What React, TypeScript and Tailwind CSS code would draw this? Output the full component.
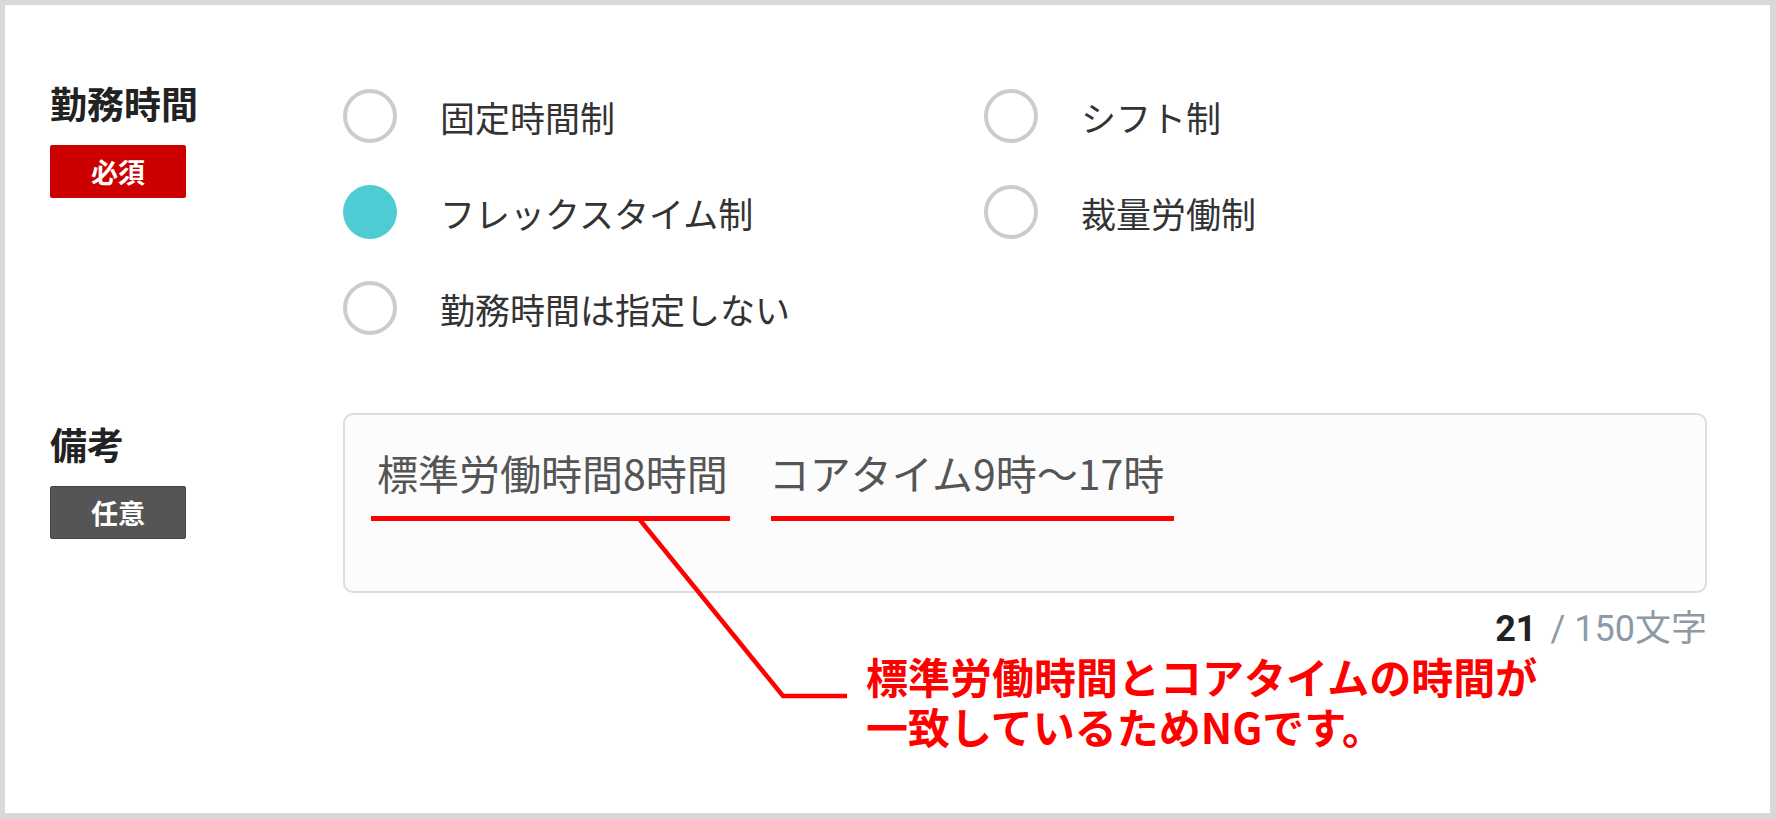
const jp = "font-['Noto_Sans_CJK_JP','Noto_Sans',sans-serif]";

const options = [
  { label: '固定時間制', checked: false },
  { label: 'シフト制', checked: false },
  { label: 'フレックスタイム制', checked: true },
  { label: '裁量労働制', checked: false },
  { label: '勤務時間は指定しない', checked: false },
];

function Radio({ label, checked }: { label: string; checked: boolean }) {
  return (
    <label className="flex h-[54px] items-center gap-[43px]">
      <span
        className={
          checked
            ? 'h-[54px] w-[54px] shrink-0 rounded-full bg-[#4fcbd4]'
            : 'h-[54px] w-[54px] shrink-0 rounded-full border-[4px] border-[#cccccc] bg-white'
        }
      />
      <span className="text-[35px] leading-none text-[#333333]">{label}</span>
    </label>
  );
}

function FieldLabel({ title, badge, required }: { title: string; badge: string; required?: boolean }) {
  return (
    <div className="flex flex-col items-start">
      <h2 className="text-[37px] font-bold leading-none text-[#222222]">{title}</h2>
      <span
        className={`mt-[23px] flex h-[53px] w-[136px] items-center justify-center rounded-[2px] text-[27px] font-bold leading-none text-white ${
          required ? 'bg-[#cc0000]' : 'border border-[#444444] bg-[#555555]'
        }`}
      >
        {badge}
      </span>
    </div>
  );
}

export default function App() {
  return (
    <div className={`relative h-[819px] w-[1776px] bg-[#d9d9d9] pb-[6px] pl-[5px] pr-[6px] pt-[5px] ${jp}`}>
      <div className="h-full bg-white pl-[45px]">
        {/* 勤務時間 */}
        <div className="flex pt-[80px]">
          <div className="w-[293px] shrink-0">
            <FieldLabel title="勤務時間" badge="必須" required />
          </div>
          <div className="grid grid-cols-[641px_1fr] gap-y-[42px] pt-[4px]">
            {options.map((o) => (
              <Radio key={o.label} label={o.label} checked={o.checked} />
            ))}
          </div>
        </div>

        {/* 備考 */}
        <div className="mt-[78px] flex">
          <div className="w-[293px] shrink-0 pt-[13px]">
            <FieldLabel title="備考" badge="任意" />
          </div>
          <div className="w-[1364px]">
            <div className="h-[180px] rounded-[10px] border-2 border-[#dddddd] bg-[#fcfcfc] pl-[32px] pt-[37px]">
              <p className="text-[41px] leading-none text-[#555555]">標準労働時間8時間　コアタイム9時〜17時</p>
            </div>
            <div className="mt-[18px] flex h-[36px] items-center justify-end text-[36px] leading-none">
              <span className="font-['Roboto','Noto_Sans_CJK_JP',sans-serif] font-bold text-[#222222]">21</span>
              <span className="ml-[14px] font-['Roboto','Noto_Sans_CJK_JP',sans-serif] text-[#8c9aa8]">/ 150文字</span>
            </div>
            <p className="ml-[523px] mt-[4px] w-max text-[42px] font-bold leading-[50px] text-[#ff0000]">
              標準労働時間とコアタイムの時間が
              <br />
              一致しているためNGです。
            </p>
          </div>
        </div>
      </div>

      {/* annotation lines */}
      <svg className="pointer-events-none absolute left-0 top-0" width="1776" height="819" viewBox="0 0 1776 819">
        <g stroke="#ff0000" fill="none">
          <line x1="371" y1="518.5" x2="730" y2="518.5" strokeWidth="5" />
          <line x1="771" y1="518.5" x2="1174" y2="518.5" strokeWidth="5" />
          <polyline points="640,520 783,696 847,696" strokeWidth="4.5" />
        </g>
      </svg>
    </div>
  );
}
